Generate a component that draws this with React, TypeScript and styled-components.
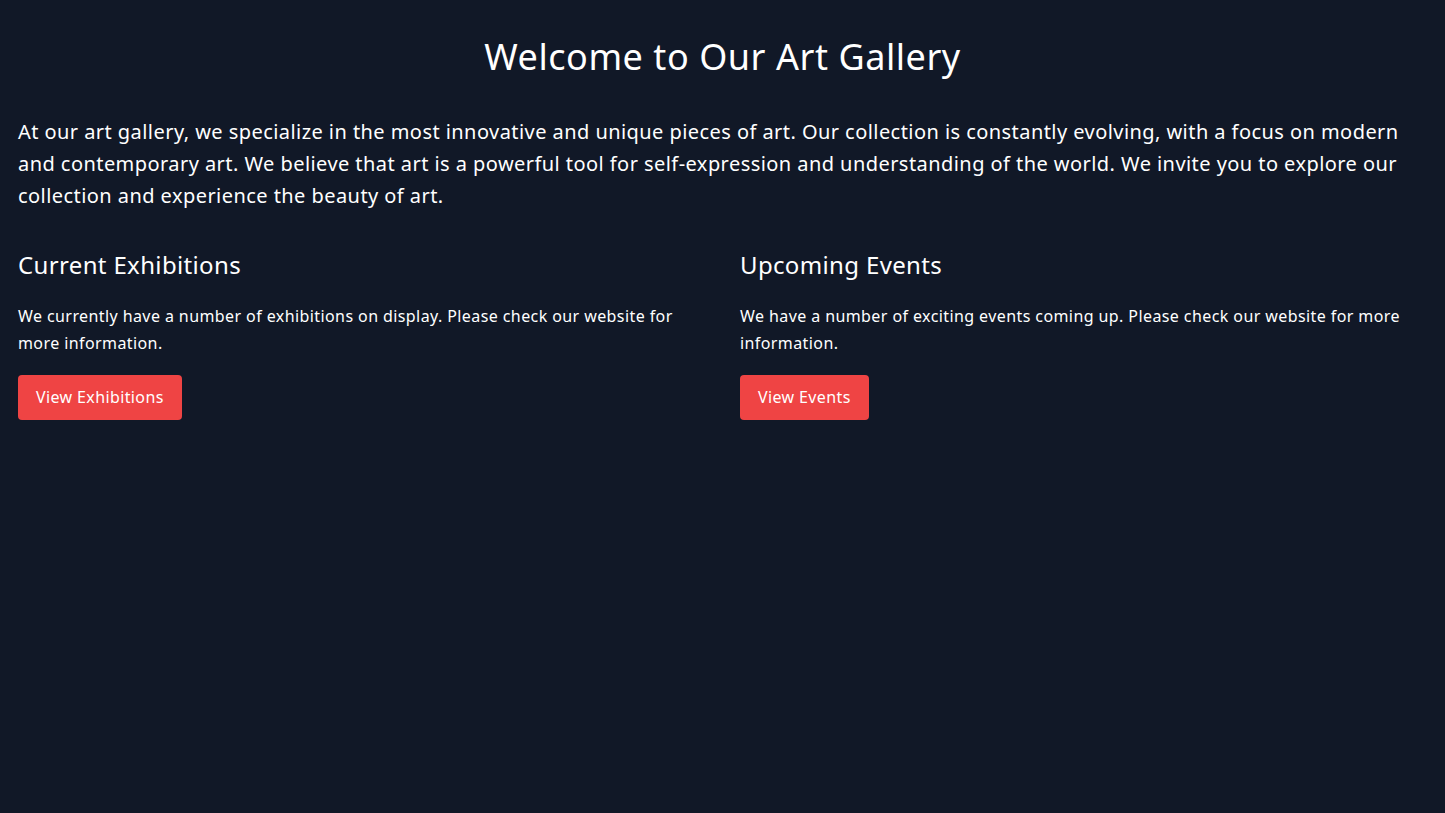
import React from 'react';
import styled, { createGlobalStyle } from 'styled-components';

const GlobalStyle = createGlobalStyle`
	html, body {
		margin: 0;
		padding: 0;
		background-color: #111827;
	}
	body {
		font-family: "Noto Sans", "Open Sans", sans-serif;
		color: #ffffff;
		letter-spacing: 0.35px;
	}
	* {
		box-sizing: border-box;
	}
`;

const Page = styled.div`
	min-height: 100vh;
	background-color: #111827;
	padding: 37px 18px;
`;

const Title = styled.h1`
	margin: 0 0 39px;
	font-size: 36px;
	line-height: 40px;
	font-weight: 400;
	letter-spacing: 0.55px;
	text-align: center;
`;

const Intro = styled.p`
	margin: 0 0 37px;
	font-size: 20px;
	line-height: 32px;
	letter-spacing: 0.44px;
`;

const Columns = styled.div`
	display: grid;
	grid-template-columns: 1fr 1fr;
	gap: 35px;
`;

const Section = styled.section`
	display: flex;
	flex-direction: column;
	align-items: flex-start;
`;

const Heading = styled.h2`
	margin: 0 0 22px;
	font-size: 24px;
	line-height: 32px;
	font-weight: 400;
`;

const Text = styled.p`
	margin: 0 0 18px;
	font-size: 16px;
	line-height: 27px;
	letter-spacing: 0.41px;
`;

const Button = styled.button`
	border: none;
	border-radius: 4px;
	background-color: #ef4444;
	color: #ffffff;
	font-family: inherit;
	font-size: 16px;
	line-height: 27px;
	letter-spacing: 0.38px;
	padding: 9px 18px;
	cursor: pointer;
`;

const sections = [
	{
		title: 'Current Exhibitions',
		text: 'We currently have a number of exhibitions on display. Please check our website for more information.',
		action: 'View Exhibitions',
	},
	{
		title: 'Upcoming Events',
		text: 'We have a number of exciting events coming up. Please check our website for more information.',
		action: 'View Events',
	},
];

function App() {
	return (
		<Page>
			<GlobalStyle />
			<Title>Welcome to Our Art Gallery</Title>
			<Intro>
				At our art gallery, we specialize in the most innovative and unique pieces of art. Our collection is
				constantly evolving, with a focus on modern and contemporary art. We believe that art is a powerful tool
				for self-expression and understanding of the world. We invite you to explore our collection and
				experience the beauty of art.
			</Intro>
			<Columns>
				{sections.map((section) => (
					<Section key={section.title}>
						<Heading>{section.title}</Heading>
						<Text>{section.text}</Text>
						<Button>{section.action}</Button>
					</Section>
				))}
			</Columns>
		</Page>
	);
}

export default App;
